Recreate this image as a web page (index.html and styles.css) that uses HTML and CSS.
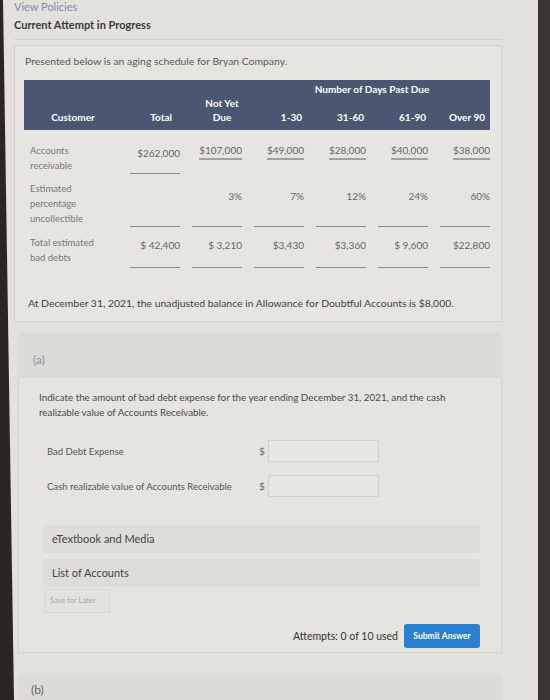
FILE: index.html
```html
<!DOCTYPE html>
<html lang="en">
<head>
<meta charset="utf-8">
<title>Current Attempt in Progress</title>
<link rel="stylesheet" href="styles.css">
</head>
<body>
<div class="screen">
  <div class="bezel-left"></div>
  <main class="main">
    <div class="view-policies">View Policies</div>
    <div class="attempt-title">Current Attempt in Progress</div>
    <div class="divider"></div>

    <section class="card">
      <p class="intro">Presented below is an aging schedule for Bryan Company.</p>
      <div class="aging">
        <div class="aging-head">
          <div class="span-days">Number of Days Past Due</div>
          <div class="h h-cust">Customer</div>
          <div class="h h-total">Total</div>
          <div class="h h-nyd">Not Yet<br>Due</div>
          <div class="h">1-30</div>
          <div class="h">31-60</div>
          <div class="h">61-90</div>
          <div class="h h-last">Over 90</div>
        </div>
        <div class="aging-row row-ar">
          <div class="lbl">Accounts<br>receivable</div>
          <div class="val val-total"><span>$262,000</span></div>
          <div class="val"><span class="ul">$107,000</span></div>
          <div class="val"><span class="ul">$49,000</span></div>
          <div class="val"><span class="ul">$28,000</span></div>
          <div class="val"><span class="ul">$40,000</span></div>
          <div class="val"><span class="ul">$38,000</span></div>
        </div>
        <div class="aging-row row-pct">
          <div class="lbl">Estimated<br>percentage<br>uncollectible</div>
          <div class="val line"></div>
          <div class="val line"><span>3%</span></div>
          <div class="val line"><span>7%</span></div>
          <div class="val line"><span>12%</span></div>
          <div class="val line"><span>24%</span></div>
          <div class="val line"><span>60%</span></div>
        </div>
        <div class="aging-row row-tot">
          <div class="lbl">Total estimated<br>bad debts</div>
          <div class="val line"><span>$ 42,400</span></div>
          <div class="val line"><span>$ 3,210</span></div>
          <div class="val line"><span>$3,430</span></div>
          <div class="val line"><span>$3,360</span></div>
          <div class="val line"><span>$ 9,600</span></div>
          <div class="val line"><span>$22,800</span></div>
        </div>
      </div>
      <p class="note">At December 31, 2021, the unadjusted balance in Allowance for Doubtful Accounts is $8,000.</p>
    </section>

    <section class="part">
      <div class="part-head">(a)</div>
      <div class="part-body">
        <p class="prompt">Indicate the amount of bad debt expense for the year ending December 31, 2021, and the cash realizable value of Accounts Receivable.</p>
        <div class="form">
          <label class="f-label">Bad Debt Expense</label>
          <span class="f-cur">$</span>
          <span class="f-input"></span>
          <label class="f-label">Cash realizable value of Accounts Receivable</label>
          <span class="f-cur">$</span>
          <span class="f-input"></span>
        </div>
        <div class="resource">eTextbook and Media</div>
        <div class="resource resource-2">List of Accounts</div>
        <div class="save">Save for Later</div>
        <div class="submit-row">
          <span class="attempts">Attempts: 0 of 10 used</span>
          <span class="submit">Submit Answer</span>
        </div>
      </div>
    </section>

    <section class="part part-b">
      <div class="part-head">(b)</div>
    </section>
  </main>
  <div class="bezel-right"></div>
</div>
</body>
</html>
```
FILE: styles.css
```css
* { box-sizing: border-box; margin: 0; padding: 0; }
html, body { width: 550px; height: 700px; overflow: hidden; }
body {
  font-family: Lato, "Open Sans", "Liberation Sans", sans-serif;
  background: #e3e1dc;
  color: #555;
}
.screen { display: flex; height: 700px; }
.bezel-left {
  width: 14px;
  flex: none;
  background: #2a2624;
  clip-path: polygon(0 0, 3px 0, 14px 100%, 0 100%);
}
.bezel-right { width: 12px; flex: none; background: #3b3532; }
.main { flex: 1; padding-right: 36px; overflow: hidden; }

.view-policies { font-size: 11px; line-height: 12px; color: #7d88b3; padding-top: 1px; height: 13px; }
.attempt-title { font-size: 11px; line-height: 14px; font-weight: 700; color: #3a3a3a; margin-top: 5px; }
.divider { height: 1px; background: #d3d1cc; margin-top: 7px; }

.card {
  margin-top: 5px;
  height: 277px;
  border: 1px solid #d3d1cc;
  background: #e7e5e0;
  padding: 8px 11px 0 9px;
}
.intro { font-size: 10.4px; line-height: 14px; color: #5a5a5a; margin-left: 1px; }

.aging { margin-top: 12px; width: 466px; }
.aging-head, .aging-row {
  display: grid;
  grid-template-columns: 94px repeat(6, 50px);
  column-gap: 12px;
}
.aging-head {
  background: #4b5672;
  color: #fff;
  font-size: 10px;
  font-weight: 700;
  line-height: 14px;
  padding: 2px 0 6px;
  align-items: end;
}
.span-days { grid-column: 4 / 8; grid-row: 1; text-align: center; }
.h { grid-row: 2; text-align: right; padding-right: 2px; }
.h-cust { text-align: center; padding: 0 0 0 4px; }
.h-total { text-align: right; padding-right: 8px; }
.h-nyd { text-align: center; padding: 0 0 0 10px; }
.h-last { padding-right: 5px; }

.lbl { font-size: 9.5px; line-height: 15px; color: #777; padding-left: 6px; }
.val { font-size: 10px; line-height: 14px; color: #666; text-align: right; }
.ul { display: inline-block; border-bottom: 2px solid #a3a19c; padding-bottom: 1px; }
.line { border-bottom: 1px solid #8d8b87; }

.row-ar { height: 45px; padding-top: 13px; }
.row-ar .val-total { border-bottom: 1px solid #8d8b87; margin-top: -13px; padding-top: 16px; margin-bottom: 1px; }
.row-pct { height: 52px; padding-top: 6px; }
.row-pct .val { padding-top: 8px; }
.row-tot { height: 41px; padding-top: 8px; }
.row-tot .val { margin-top: -8px; padding-top: 11px; }

.note { font-size: 10.4px; line-height: 14px; color: #3f3f3f; margin-top: 28px; margin-left: 4px; }

.part { margin-top: 11px; margin-left: 4px; }
.part-head {
  height: 45px;
  background: #dcdad5;
  font-size: 12px;
  line-height: 14px;
  color: #8a8fa0;
  padding: 20px 0 0 15px;
}
.part-body {
  background: #e6e4df;
  border: 1px solid #d6d4cf;
  border-top: none;
  padding: 12px 21px 4px 20px;
}
.prompt { font-size: 9.8px; line-height: 15px; color: #4a4a4a; }
.form {
  display: grid;
  grid-template-columns: 212px 9px 111px;
  grid-auto-rows: 22px;
  row-gap: 13px;
  align-items: center;
  margin: 20px 0 0 8px;
}
.f-label { font-size: 9.5px; color: #555; }
.f-cur { font-size: 10px; color: #666; }
.f-input { height: 22px; border: 1px solid #d2d0cb; background: #e9e7e2; }

.resource {
  margin: 28px 0 0 4px;
  height: 28px;
  background: #dfddd8;
  border-radius: 3px;
  font-size: 11px;
  line-height: 28px;
  color: #444;
  padding-left: 9px;
}
.resource-2 { margin-top: 6px; }
.save {
  margin: 2px 0 0 5px;
  width: 66px;
  height: 24px;
  border: 1px solid #d8d6d1;
  background: #e4e2dd;
  font-size: 7.5px;
  line-height: 22px;
  color: #a8a6a2;
  padding-left: 5px;
}
.submit-row {
  display: flex;
  justify-content: flex-end;
  align-items: center;
  gap: 6px;
  margin-top: 11px;
}
.attempts { font-size: 10.5px; color: #333; }
.submit {
  width: 76px;
  height: 24px;
  background: #2b7fd1;
  border-radius: 3px;
  color: #fff;
  font-size: 8.5px;
  font-weight: 700;
  line-height: 24px;
  text-align: center;
}

.part-b { margin-top: 22px; }
.part-b .part-head { padding: 8px 0 0 13px; color: #666; background: #dddbd6; }
```
